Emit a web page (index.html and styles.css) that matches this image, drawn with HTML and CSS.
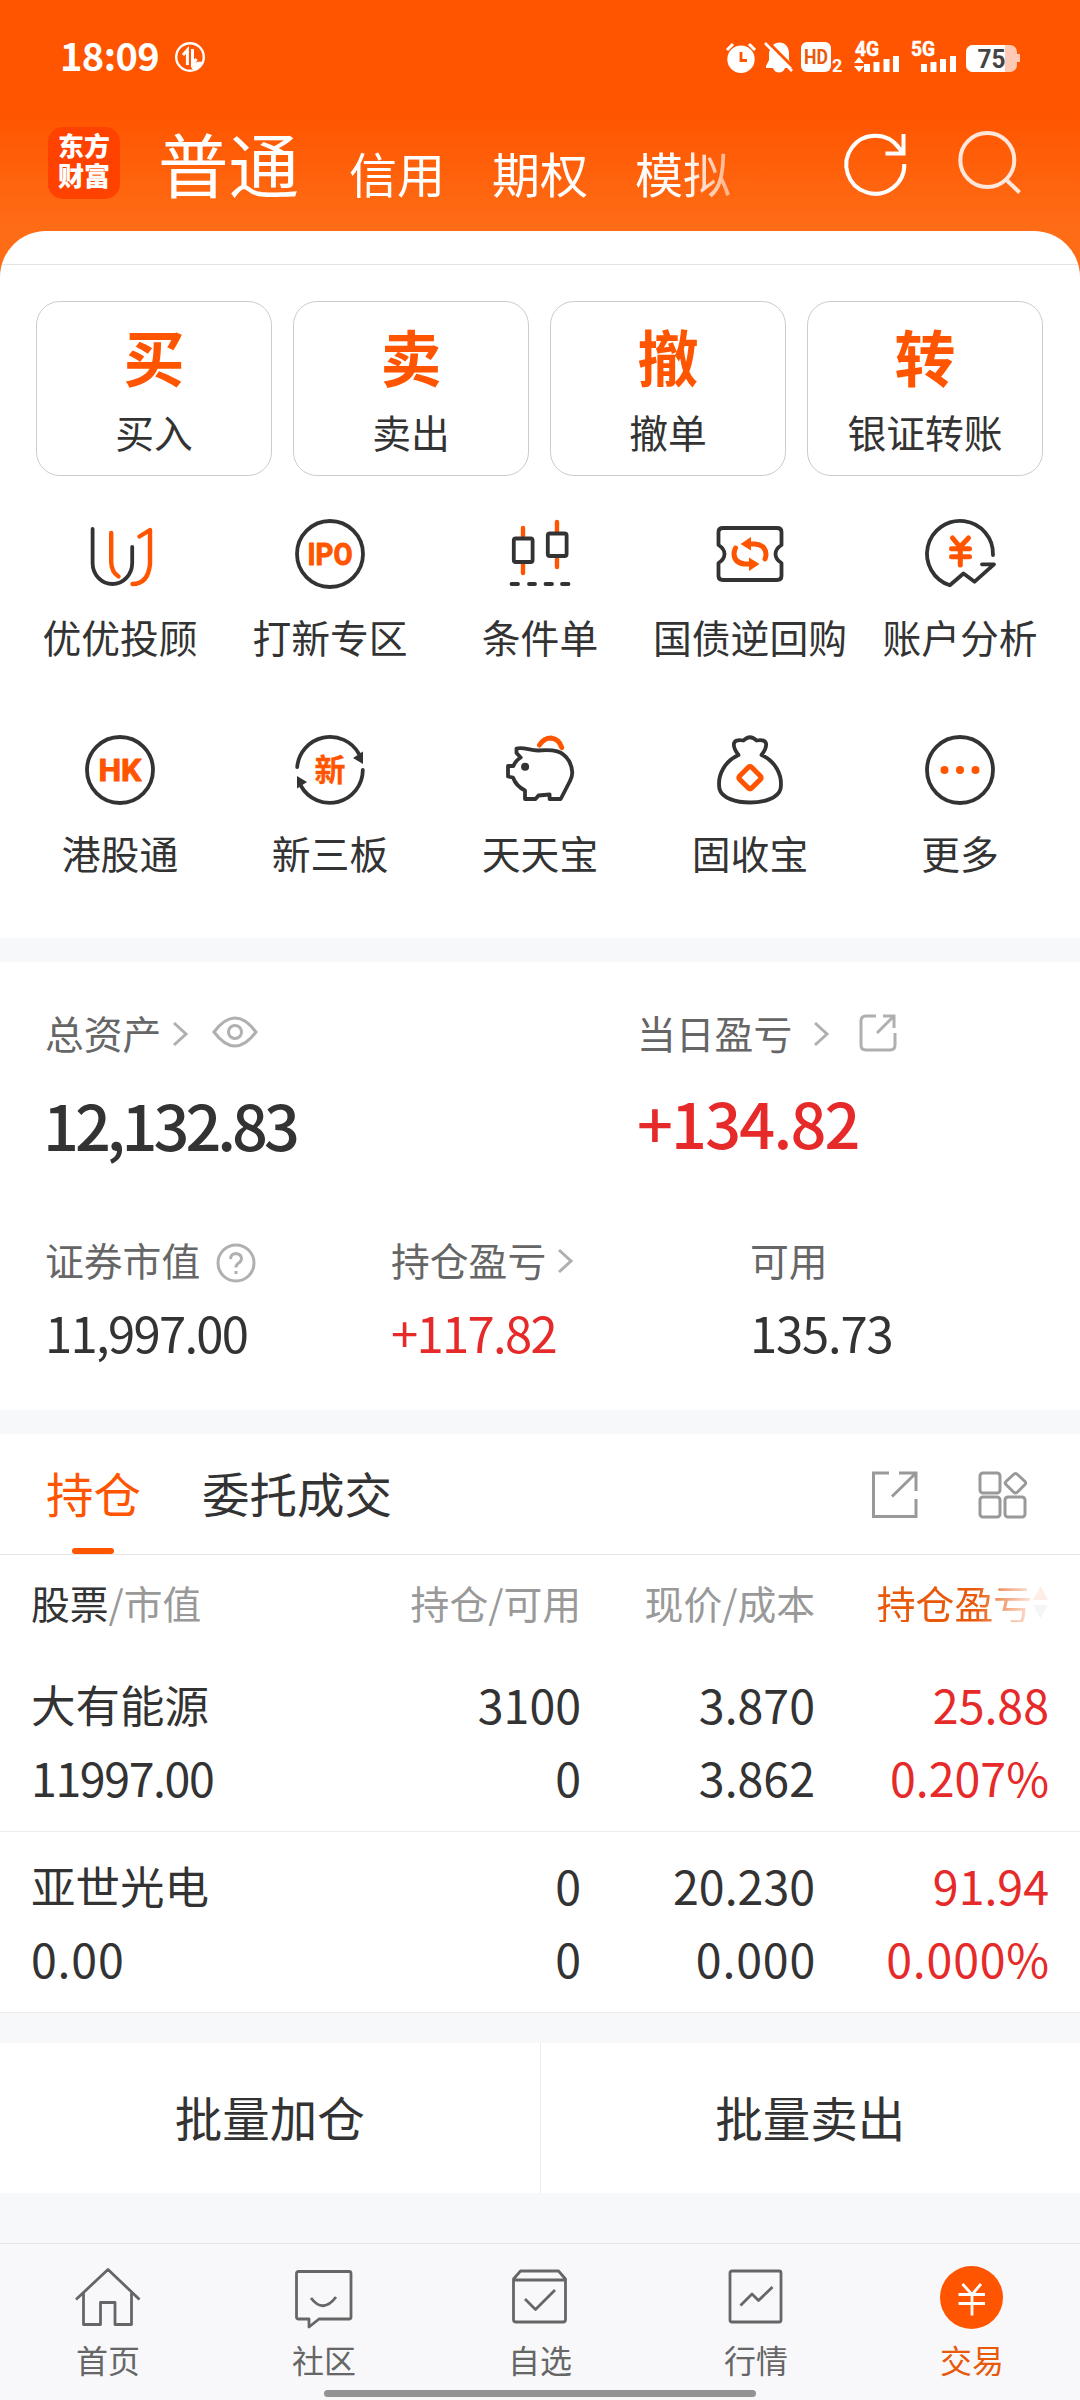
FILE: index.html
```html
<!DOCTYPE html>
<html lang="zh-CN">

<head>
    <meta charset="UTF-8">
    <meta name="viewport" content="width=device-width, initial-scale=1.0">
    <title>东方财富 - 交易</title>
    <link rel="stylesheet" href="styles.css">
</head>

<body>
    <!-- Header -->
    <header class="header">
        <div class="status-bar">
            <span class="time">18:09</span>
            <svg class="status-data" width="32" height="32" viewBox="0 0 32 32" fill="none" stroke="#fff">
                <circle cx="16" cy="16" r="13.8" stroke-width="2.4" />
                <path d="M13.400 24V9L9 14M18.500 8V23L22.500 18" stroke-width="3" />
                <path d="M18 28c0-6 4-8 11-7-1 5-5 8-11 7z" fill="#fff" stroke="none" />
            </svg>
            <div class="status-icons">
                <svg width="30" height="32" viewBox="0 0 30 32">
                    <circle cx="15" cy="18.300" r="13.700" fill="#fff" />
                    <path d="M1 9l6-6M29 9l-6-6" stroke="#fff" stroke-width="3" />
                    <path d="M15 11v8.500h6" fill="none" stroke="#ff5500" stroke-width="2.800" />
                </svg>
                <svg class="bell" width="28" height="32" viewBox="0 0 28 32">
                    <path d="M8 4c8-6 16 0 16 8v7l3 6v2H1v-2l3-6v-8z" fill="#fff" />
                    <path d="M8 27h12c-2 6-10 6-12 0z" fill="#fff" />
                    <path d="M2 0l28 28" stroke="#ff5500" stroke-width="3" />
                    <path d="M0 2l27 28" stroke="#fff" stroke-width="2.600" />
                </svg>
                <svg class="hd" width="42" height="32" viewBox="0 0 42 32">
                    <rect y="1" width="30" height="30" rx="6" fill="#fff" />
                    <text class="sb-text hd-text" x="15" y="23" text-anchor="middle" textLength="24" lengthAdjust="spacingAndGlyphs">HD</text>
                    <text class="sb-text" x="31" y="31" font-size="18">2</text>
                </svg>
                <svg class="net-4g" width="44" height="32" viewBox="0 0 44 32" fill="#fff">
                    <text class="sb-text net-text" x="0" y="15" textLength="24" lengthAdjust="spacingAndGlyphs">4G</text>
                    <path d="M4 16l5 6H-1zM4 31l5-6H-1z" />
                    <path d="M9 23h6v8H9zM18.500 21h6v10h-6zM28.500 18h6v13h-6zM38 15h6v16h-6z" />
                </svg>
                <svg class="net-5g" width="45" height="32" viewBox="0 0 45 32" fill="#fff">
                    <text class="sb-text net-text" x="0" y="15" textLength="24" lengthAdjust="spacingAndGlyphs">5G</text>
                    <path d="M10 23h6v8h-6zM19.500 21h6v10h-6zM29 18h6v13h-6zM39 15h6v16h-6z" />
                </svg>
                <svg class="battery" width="54" height="32" viewBox="0 0 54 32">
                    <rect y="4" width="51" height="27" rx="7" fill="#ffc9b3" />
                    <path d="M51 13h3v8h-3z" fill="#ffc9b3" />
                    <path d="M7 4h32v27H7a7 7 0 0 1-7-7V11a7 7 0 0 1 7-7z" fill="#fff" />
                    <text class="sb-text battery-text" x="11.500" y="26.500" textLength="28" lengthAdjust="spacingAndGlyphs">75</text>
                </svg>
            </div>
        </div>
        <div class="top-nav">
            <div class="logo">东方<br>财富</div>
            <div class="account-tabs">
                <span class="account-tab active">普通</span>
                <span class="account-tab">信用</span>
                <span class="account-tab">期权</span>
                <span class="account-tab">模拟</span>
            </div>
            <svg class="icon-refresh" width="64" height="66" viewBox="0 0 64 66" fill="none" stroke="#fff" stroke-width="4">
                <path d="M60.300 33A29 29 0 1 1 55 17L59.500 22.500M59.500 3V22.500H41.500" />
            </svg>
            <svg class="icon-search" width="64" height="66" viewBox="0 0 64 66" fill="none" stroke="#fff" stroke-width="4">
                <circle cx="29.300" cy="29" r="27" />
                <path d="M48 48.500L61.500 61.500" />
            </svg>
        </div>
    </header>

    <!-- Trade entries -->
    <section class="sheet">
        <div class="trade-cards">
            <div class="trade-card"><b>买</b><span>买入</span></div>
            <div class="trade-card"><b>卖</b><span>卖出</span></div>
            <div class="trade-card"><b>撤</b><span>撤单</span></div>
            <div class="trade-card"><b>转</b><span>银证转账</span></div>
        </div>

        <div class="menu-grid">
            <div class="menu-item">
                <svg class="menu-icon" viewBox="0 0 72 72">
                    <path class="dark" d="M8.600 11V45a19.800 21 0 0 0 39.600 0V29" />
                    <path class="orange" d="M27.200 15V44Q27.500 54 34.500 58.500M55.500 18.500L66 12V46Q64 66 48.500 66" />
                </svg>
                <span>优优投顾</span>
            </div>
            <div class="menu-item">
                <svg class="menu-icon" viewBox="0 0 72 72">
                    <circle class="dark" cx="36" cy="36" r="33" />
                    <text class="icon-text" x="36" y="47" text-anchor="middle" textLength="45" lengthAdjust="spacingAndGlyphs">IPO</text>
                </svg>
                <span>打新专区</span>
            </div>
            <div class="menu-item">
                <svg class="menu-icon" viewBox="0 0 72 72">
                    <path class="orange" d="M19 10V18M19 46V55M53 4V13M53 41V49" />
                    <rect class="dark" x="9.800" y="20.500" width="18.800" height="23.500" rx="2" />
                    <rect class="dark" x="43.800" y="15.500" width="18.800" height="22.500" rx="2" />
                    <path class="dark" d="M7.500 66H14M25 66H31M41.500 66H48M58 66H64.500" />
                </svg>
                <span>条件单</span>
            </div>
            <div class="menu-item">
                <svg class="menu-icon" viewBox="0 0 72 72">
                    <path class="dark" d="M9 10H63Q67.500 10 67.500 14V27C59.500 32 59.500 40 67.500 45V58Q67.500 62 63 62H9Q4.500 62 4.500 58V45C12.500 40 12.500 32 4.500 27V14Q4.500 10 9 10Z" />
                    <path class="orange thick" d="M34 26H41Q51.500 27 52 36Q52 39 51 41M38 46H31Q20.500 45 20 36Q20 33 21.500 30" />
                    <path class="fill-orange" d="M26.500 26L37 19V32.500ZM45.500 46L35 39.500V53Z" />
                </svg>
                <span>国债逆回购</span>
            </div>
            <div class="menu-item">
                <svg class="menu-icon" viewBox="0 0 72 72">
                    <path class="dark" d="M69 37A33 33 0 1 0 25.800 67.300L39.500 55.500L50.600 63.700L70 46.300H58" />
                    <path class="orange thick" d="M28.500 20L36 29L44.500 20M27.500 30.800H45.500M27.500 38.800H45.500M36.300 29V47" />
                </svg>
                <span>账户分析</span>
            </div>
            <div class="menu-item">
                <svg class="menu-icon" viewBox="0 0 72 72">
                    <circle class="dark" cx="36" cy="36" r="33" />
                    <text class="icon-text" x="36" y="47" text-anchor="middle" textLength="43" lengthAdjust="spacingAndGlyphs">HK</text>
                </svg>
                <span>港股通</span>
            </div>
            <div class="menu-item">
                <svg class="menu-icon" viewBox="0 0 72 72">
                    <path class="dark" d="M3.200 33A33 33 0 0 1 65 20M68.800 36A33 33 0 0 1 7 52" />
                    <path class="fill-dark" d="M59 24L69 17.500V30ZM13 48L3 54.500V42Z" />
                    <text class="icon-text icon-xin" x="36" y="47" text-anchor="middle">新</text>
                </svg>
                <span>新三板</span>
            </div>
            <div class="menu-item">
                <svg class="menu-icon" viewBox="0 0 72 72">
                    <path class="dark" d="M12.500 14.500C21 13 25 16.500 34 16.500C50 15 59 17 65 27Q71 38 66 47L56.700 65H45.600V60.500L34.500 61.500L31.500 65H21V56.500Q12 52 9 43.500L4 42.500V32H9.500Q11 27 16.700 23.500L12.500 19Z" />
                    <circle class="fill-dark" cx="21.100" cy="32.700" r="4" />
                    <path class="orange thick" d="M35.500 11Q40 4 47 4Q55 5 57.700 13.500" />
                </svg>
                <span>天天宝</span>
            </div>
            <div class="menu-item">
                <svg class="menu-icon" viewBox="0 0 72 72">
                    <path class="dark" d="M24.500 21C19 14 16 4 29.500 6.500Q36 0 42.500 6.500C56 4 53 14 47.500 21C61 27 69 41 66.500 55C62 73 10 73 5.500 55C3 41 11 27 24.500 21" />
                    <rect class="orange thick" x="27.500" y="35.200" width="17" height="17" rx="2" transform="rotate(45 36 43.700)" />
                </svg>
                <span>固收宝</span>
            </div>
            <div class="menu-item">
                <svg class="menu-icon" viewBox="0 0 72 72">
                    <circle class="dark" cx="36" cy="36" r="33" />
                    <circle class="fill-orange" cx="20.500" cy="36" r="4" />
                    <circle class="fill-orange" cx="36" cy="36" r="4" />
                    <circle class="fill-orange" cx="51.500" cy="36" r="4" />
                </svg>
                <span>更多</span>
            </div>
        </div>
    </section>

    <!-- Assets -->
    <section class="assets">
        <div class="assets-main">
            <div>
                <div class="label">总资产
                    <svg class="chevron" viewBox="0 0 16 26"><path d="M2 2L14 13L2 24" /></svg>
                    <svg class="eye" width="46" height="32" viewBox="0 0 46 32">
                        <path d="M2 16Q23-12 44 16Q23 44 2 16Z" />
                        <circle cx="23" cy="16" r="6.500" />
                    </svg>
                </div>
                <div class="big-value">12,132.83</div>
            </div>
            <div>
                <div class="label">当日盈亏
                    <svg class="chevron far" viewBox="0 0 16 26"><path d="M2 2L14 13L2 24" /></svg>
                    <svg class="share-small" width="38" height="40" viewBox="0 0 38 40">
                        <path d="M17 3H7Q2 3 2 8V32Q2 37 7 37H31Q36 37 36 32V20M24 3H35V15M35 3L18 20" />
                    </svg>
                </div>
                <div class="big-value profit red">+134.82</div>
            </div>
        </div>
        <div class="assets-sub">
            <div>
                <div class="label">证券市值
                    <svg class="help" width="40" height="40" viewBox="0 0 40 40">
                        <circle cx="20" cy="20" r="18" />
                        <path d="M14.500 16Q15 10.500 20 10.500Q25.500 11 25.500 16Q25 19 22 20.500Q20 22 20 24.500M20 28V31" />
                    </svg>
                </div>
                <div class="value">11,997.00</div>
            </div>
            <div>
                <div class="label">持仓盈亏
                    <svg class="chevron" viewBox="0 0 16 26"><path d="M2 2L14 13L2 24" /></svg>
                </div>
                <div class="value red">+117.82</div>
            </div>
            <div>
                <div class="label">可用</div>
                <div class="value plain">135.73</div>
            </div>
        </div>
    </section>

    <!-- Holdings -->
    <section class="holdings">
        <div class="tabs">
            <span class="tab active">持仓</span>
            <span class="tab">委托成交</span>
            <div class="tab-tools">
                <svg width="48" height="48" viewBox="0 0 48 48">
                    <path d="M18 2H2.500V45.500H45V28M28 2H45V20M45 2L21 25.500" />
                </svg>
                <svg width="50" height="48" viewBox="0 0 50 48">
                    <rect x="2" y="2" width="20" height="20" rx="3" />
                    <rect x="2" y="26" width="20" height="20" rx="3" />
                    <rect x="27" y="26" width="20" height="20" rx="3" />
                    <path d="M35.500 3.500Q37.500 1.500 39.500 3.500L47 10.500Q48.500 12 47 13.500L39.500 21Q37.500 23 35.500 21L28 13.500Q26.500 12 28 10.500Z" />
                </svg>
            </div>
        </div>
        <div class="row table-head">
            <span><em>股票</em>/市值</span>
            <span>持仓/可用</span>
            <span>现价/成本</span>
            <span class="sorted">持仓盈亏
                <svg width="17" height="36" viewBox="0 0 17 36">
                    <path d="M8.500 2L16 16H1Z" fill="#ff5500" />
                    <path d="M8.500 35L16 21H1Z" fill="#999" />
                </svg>
            </span>
        </div>
        <div class="row stock">
            <span class="name">大有能源</span>
            <span>3100</span>
            <span>3.870</span>
            <span class="red">25.88</span>
            <span class="ones">11997.00</span>
            <span>0</span>
            <span>3.862</span>
            <span class="red">0.207%</span>
        </div>
        <div class="row stock">
            <span class="name">亚世光电</span>
            <span>0</span>
            <span>20.230</span>
            <span class="red">91.94</span>
            <span class="zeros">0.00</span>
            <span>0</span>
            <span class="zeros">0.000</span>
            <span class="red zeros">0.000%</span>
        </div>
    </section>

    <div class="batch-actions">
        <button class="batch-btn">批量加仓</button>
        <button class="batch-btn">批量卖出</button>
    </div>

    <!-- Bottom navigation -->
    <nav class="bottom-nav">
        <a class="nav-item">
            <svg viewBox="0 0 72 64">
                <path d="M4 33.500L36 3.500L67.500 33.500M11.500 27V58.500H28.500V36.500H43V58.500H59.500V27" />
            </svg>
            <span>首页</span>
        </a>
        <a class="nav-item">
            <svg viewBox="0 0 72 64">
                <path d="M10.500 5.500H61Q63 5.500 63 7.500V51Q63 53 61 53H31L21 61V53H10.500Q8.500 53 8.500 51V7.500Q8.500 5.500 10.500 5.500ZM23 32Q35 48 48 31" />
            </svg>
            <span>社区</span>
        </a>
        <a class="nav-item">
            <svg viewBox="0 0 72 64">
                <path d="M16.500 5H54.500L61.500 13V53.500Q61.500 56 59 56H12Q9.500 56 9.500 53.500V13ZM9.500 14H61.500M21 33L31.500 43.500L51 24" />
            </svg>
            <span>自选</span>
        </a>
        <a class="nav-item">
            <svg viewBox="0 0 72 64">
                <rect x="10" y="5" width="51" height="51" rx="2" />
                <path d="M20.500 39.500L32 28L38.500 34.500L52.500 21" />
            </svg>
            <span>行情</span>
        </a>
        <a class="nav-item active">
            <svg viewBox="0 0 72 64">
                <circle cx="35.500" cy="31.500" r="31.500" />
                <path d="M26.500 18L36 28.500L45 18M22.500 28.500H49M22.500 37.500H49M36 28.500V49.500" />
            </svg>
            <span>交易</span>
        </a>
        <div class="home-indicator"></div>
    </nav>
</body>

</html>
```
FILE: styles.css
```css
/* Global Styles */
:root {
    --primary-color: #ff5500;
    --text-color: #333333;
    --label-color: #666666;
    --muted-color: #999999;
    --red-color: #e62a2a;
    --background-color: #f7f8fa;
    --line-color: #e4e4e4;
}

* {
    margin: 0;
    padding: 0;
    box-sizing: border-box;
}

body {
    width: 1080px;
    height: 2400px;
    overflow: hidden;
    background-color: var(--background-color);
    color: var(--text-color);
    font-family: "Noto Sans CJK SC", sans-serif;
    font-size: 38.8px;
    line-height: 40px;
}

svg {
    display: block;
    flex: none;
    overflow: visible;
}

.red {
    color: var(--red-color);
}

/* Header */
.header {
    height: 285px;
    background: linear-gradient(#ff5500 0, #ff5500 115px, #ff6c16 225px, #ff6c16 100%);
    color: white;
}

.status-bar {
    display: flex;
    align-items: center;
    height: 115px;
    padding-left: 60px;
}

.time {
    width: 114px;
    padding-bottom: 5px;
    font-size: 38px;
    font-weight: 700;
    line-height: 40px;
    letter-spacing: -0.6px;
}

.status-data {
    margin-bottom: 1px;
}

.status-icons {
    display: flex;
    margin-left: 520px;
    margin-bottom: 1px;
}

.sb-text {
    font-family: Roboto, sans-serif;
    font-weight: 700;
    fill: white;
}

.net-text {
    font-size: 20px;
    stroke: white;
    stroke-width: 0.5;
}

.hd-text {
    font-size: 20px;
    fill: #e8590c;
}

.battery-text {
    font-size: 26px;
    fill: #444;
}

.bell {
    margin-left: 9px;
}

.hd {
    margin-left: 8px;
}

.net-4g,
.net-5g {
    margin-left: 12px;
}

.battery {
    margin-left: 10px;
}

.top-nav {
    display: flex;
    padding: 12px 0 0 48px;
}

.logo {
    flex: none;
    width: 72px;
    height: 72px;
    padding-top: 3px;
    border-radius: 15px;
    background-color: #ff4200;
    font-size: 26px;
    font-weight: 900;
    line-height: 30px;
    text-align: center;
}

.account-tabs {
    display: flex;
    flex: none;
    align-items: baseline;
    gap: 47px;
    width: 660px;
    height: 90px;
    margin-top: -1px;
    padding-left: 38px;
    white-space: nowrap;
    -webkit-mask-image: linear-gradient(90deg, #000 565px, transparent 655px);
    mask-image: linear-gradient(90deg, #000 565px, transparent 655px);
}

.account-tab {
    font-size: 48px;
    line-height: 72px;
}

.account-tab.active {
    margin-right: 3px;
    font-size: 70.5px;
}

.icon-refresh {
    margin: 4px 0 0 64px;
}

.icon-search {
    margin: 4px 0 0 50px;
    opacity: 0.85;
}

/* Trade entries */
.sheet {
    height: 707px;
    margin-top: -54px;
    border-radius: 46px 46px 0 0;
    background: linear-gradient(var(--line-color), var(--line-color)) 0 33px / 100% 1px no-repeat white;
}

.trade-cards {
    display: grid;
    grid-template-columns: repeat(4, 236px);
    gap: 21px;
    padding: 70px 36px 0;
}

.trade-card {
    display: flex;
    flex-direction: column;
    align-items: center;
    gap: 25px;
    height: 175px;
    padding-top: 24px;
    border: 1px solid #cccccc;
    border-radius: 24px;
}

.trade-card b {
    color: var(--primary-color);
    font-size: 61px;
    font-weight: 700;
    line-height: 60px;
}

.menu-grid {
    display: grid;
    grid-template-columns: repeat(5, 1fr);
    row-gap: 78px;
    padding: 42px 15px 0;
}

.menu-item {
    display: flex;
    flex-direction: column;
    align-items: center;
    gap: 26px;
    white-space: nowrap;
}

.menu-icon {
    width: 72px;
    height: 72px;
}

.dark,
.orange {
    fill: none;
    stroke: var(--text-color);
    stroke-width: 3.8;
    stroke-linecap: round;
    stroke-linejoin: round;
}

.orange {
    stroke: var(--primary-color);
    stroke-width: 4.4;
}

.thick {
    stroke-width: 5;
}

.fill-dark {
    fill: var(--text-color);
}

.fill-orange {
    fill: var(--primary-color);
}

.icon-text {
    fill: var(--primary-color);
    stroke: var(--primary-color);
    stroke-width: 1;
    stroke-linejoin: round;
    font-family: Roboto, sans-serif;
    font-size: 31px;
    font-weight: 700;
}

.icon-xin {
    font-family: "Noto Sans CJK SC", sans-serif;
    stroke-width: 0.3;
}

/* Assets */
.assets {
    height: 448px;
    margin-top: 24px;
    padding: 50px 0 0 45px;
    background-color: white;
}

.assets-main {
    display: grid;
    grid-template-columns: 592px 1fr;
}

.assets-sub {
    display: grid;
    grid-template-columns: 346px 359px 1fr;
    margin-top: 83px;
}

.label {
    display: flex;
    align-items: center;
    height: 40px;
    color: var(--label-color);
}

.label svg {
    fill: none;
    stroke: #b0b0b0;
    stroke-width: 3;
}

.chevron {
    width: 16px;
    height: 26px;
    margin: 4px 0 0 11px;
}

.chevron.far {
    margin-left: 21px;
}

.eye {
    margin-left: 24px;
}

.share-small {
    margin: 2px 0 0 30px;
}

.help {
    margin: 7px 0 0 16px;
}

.big-value {
    margin: 40px 0 0 -2px;
    font-size: 63px;
    font-weight: 500;
    line-height: 64px;
    letter-spacing: -4px;
}

.big-value.profit {
    margin: 38px 0 0;
    letter-spacing: -1.8px;
}

.value {
    margin-top: 28px;
    font-size: 49px;
    line-height: 50px;
    letter-spacing: -1.7px;
}

.value.plain {
    letter-spacing: -1.2px;
}

/* Holdings */
.holdings {
    margin-top: 24px;
    background-color: white;
}

.tabs {
    display: flex;
    height: 121px;
    padding: 35px 52px 0 46px;
    border-bottom: 1px solid var(--line-color);
    font-size: 47.5px;
    line-height: 48px;
}

.tab {
    margin-right: 61px;
}

.tab.active {
    position: relative;
    color: var(--primary-color);
}

.tab.active::after {
    content: "";
    position: absolute;
    top: 79px;
    left: 26px;
    width: 42px;
    height: 6px;
    border-radius: 3px;
    background-color: var(--primary-color);
}

.tab-tools {
    display: flex;
    gap: 59px;
    margin: 2px 0 0 auto;
}

.tab-tools svg {
    fill: none;
    stroke: var(--muted-color);
    stroke-width: 3;
}

.row {
    display: grid;
    grid-template-columns: 250px 300px 234px 234px;
    padding: 29px 0 0 31px;
    text-align: right;
}

.row span:nth-child(4n + 1) {
    text-align: left;
}

.table-head {
    align-content: start;
    height: 96px;
    padding-top: 27px;
    color: var(--muted-color);
}

.table-head em {
    color: var(--text-color);
    font-style: normal;
}

.sorted {
    display: flex;
    align-items: center;
    justify-content: flex-end;
    height: 40px;
    color: #e8590c;
    -webkit-mask-image: linear-gradient(90deg, #000 160px, rgba(0, 0, 0, 0.1) 220px);
    mask-image: linear-gradient(90deg, #000 160px, rgba(0, 0, 0, 0.1) 220px);
}

.stock {
    row-gap: 25px;
    align-content: start;
    height: 181px;
    border-bottom: 1px solid #ececec;
    font-size: 46.5px;
    line-height: 48px;
}

.stock .name {
    font-size: 44.5px;
}

.stock .ones {
    letter-spacing: -1.4px;
}

.stock .zeros {
    letter-spacing: 0.8px;
    margin-right: -1px;
}

/* Batch buttons */
.batch-actions {
    display: flex;
    height: 150px;
    margin-top: 30px;
    background-color: white;
}

.batch-btn {
    flex: 1;
    padding-bottom: 3px;
    border: none;
    background: none;
    color: var(--text-color);
    font-family: inherit;
    font-size: 47.5px;
    cursor: pointer;
}

.batch-btn + .batch-btn {
    border-left: 1px solid #ececec;
}

/* Bottom navigation */
.bottom-nav {
    display: flex;
    position: relative;
    height: 157px;
    margin-top: 50px;
    padding-top: 22px;
    border-top: 1px solid var(--line-color);
    background-color: #f8f8fa;
}

.nav-item {
    display: flex;
    flex: 1;
    flex-direction: column;
    align-items: center;
    gap: 13px;
    color: var(--label-color);
    font-size: 32px;
    line-height: 32px;
}

.nav-item svg {
    width: 72px;
    height: 64px;
    fill: none;
    stroke: var(--label-color);
    stroke-width: 2.8;
    stroke-linejoin: round;
}

.nav-item.active {
    color: #e8590c;
}

.nav-item.active svg {
    stroke: white;
}

.nav-item.active circle {
    fill: var(--primary-color);
    stroke: none;
}

.home-indicator {
    position: absolute;
    left: 324px;
    bottom: 3px;
    width: 432px;
    height: 7px;
    border-radius: 4px;
    background-color: #929292;
}
```
